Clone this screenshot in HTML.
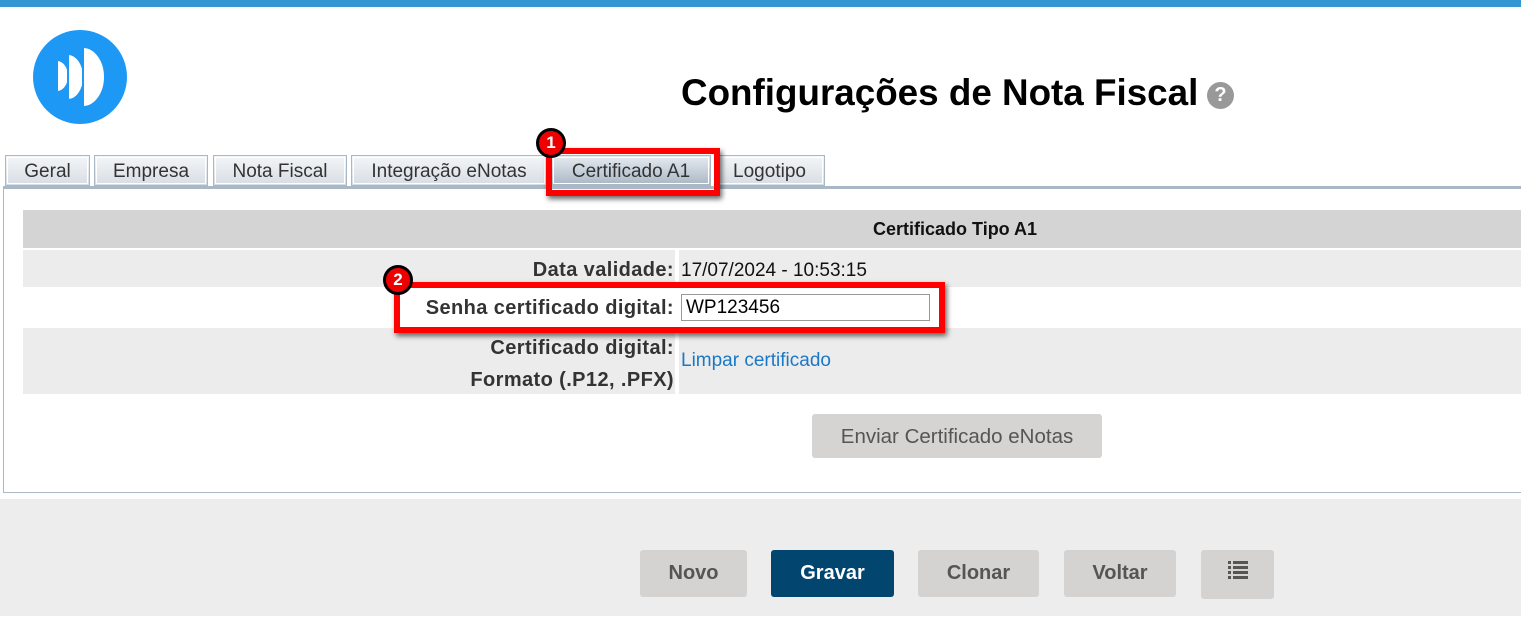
<!DOCTYPE html>
<html><head><meta charset="utf-8"><style>
*{box-sizing:border-box;margin:0;padding:0}
body{width:1521px;height:623px;overflow:hidden;background:#fff;font-family:"Liberation Sans",Arial,sans-serif;position:relative}
.a{position:absolute}
.tab{position:absolute;top:155px;height:31px;border:1px solid #aab8c6;background:linear-gradient(#f4f6f8,#d6dde4);color:#333;font-size:19px;text-align:center;line-height:31px;outline:1px solid #fff;outline-offset:-3px;white-space:nowrap}
.lbl{position:absolute;right:847px;font-size:20px;font-weight:bold;color:#333;text-align:right;letter-spacing:0.4px;white-space:nowrap}
.btn{position:absolute;top:550px;height:47px;background:#d5d3d1;border-radius:3px;color:#555;font-size:20px;font-weight:bold;text-align:center;line-height:47px}
.red{position:absolute;border:6px solid #f00;box-shadow:2px 3px 5px rgba(0,0,0,.6)}
.badge{position:absolute;width:30px;height:30px;border-radius:50%;background:#e00;border:3px solid #000;color:#fff;font-weight:bold;font-size:17px;text-align:center;line-height:24px}
</style></head><body>
<div class="a" style="left:0;top:0;width:1521px;height:7px;background:#3398d2"></div>
<svg class="a" style="left:33px;top:30px" width="94" height="94" viewBox="0 0 94 94">
<circle cx="47" cy="47" r="47" fill="#1e98f5"/>
<path d="M24 30 A12 16 0 0 1 24 62 Z" fill="#fff" stroke="#1e98f5" stroke-width="2"/>
<path d="M35 24 A16 23 0 0 1 35 70 Z" fill="#fff" stroke="#1e98f5" stroke-width="2"/>
<path d="M50 17 A22 30 0 0 1 50 77 Z" fill="#fff" stroke="#1e98f5" stroke-width="2"/>
</svg>
<div class="a" style="left:681px;top:72px;font-size:36.8px;font-weight:bold;color:#000">Configurações de Nota Fiscal</div>
<div class="a" style="left:1207px;top:82px;width:27px;height:27px;border-radius:50%;background:#999;color:#fff;font-weight:bold;font-size:20px;text-align:center;line-height:27px">?</div>

<div class="tab" style="left:5px;width:85px">Geral</div>
<div class="tab" style="left:94px;width:114px">Empresa</div>
<div class="tab" style="left:213px;width:134px">Nota Fiscal</div>
<div class="tab" style="left:351px;width:196px">Integração eNotas</div>
<div class="tab" style="left:551px;width:160px;background:linear-gradient(#e6ebf0,#a9b7c4)">Certificado A1</div>
<div class="tab" style="left:714px;width:111px">Logotipo</div>

<div class="a" style="left:3px;top:186px;width:1530px;height:307px;border:1px solid #aab8c6;border-top:3px solid #aab8c6"></div>
<div class="a" style="left:23px;top:210px;width:1500px;height:38px;background:#d4d4d4;font-size:18px;font-weight:bold;line-height:38px;padding-left:850px;color:#111">Certificado Tipo A1</div>
<div class="a" style="left:23px;top:250px;width:1500px;height:37px;background:#ececec"></div>
<div class="a" style="left:23px;top:328px;width:1500px;height:66px;background:#ececec"></div>
<div class="a" style="left:675px;top:250px;width:4px;height:144px;background:#fff"></div>
<div class="lbl" style="top:259px">Data validade:</div>
<div class="a" style="left:681px;top:260px;font-size:19px;color:#111">17/07/2024 - 10:53:15</div>
<div class="lbl" style="top:297px">Senha certificado digital:</div>
<div class="a" style="left:681px;top:294px;width:249px;height:27px;border:1px solid #999;background:#fff;font-size:19px;line-height:25px;padding-left:4px;color:#000">WP123456</div>
<div class="lbl" style="top:332px;line-height:32px">Certificado digital:<br>Formato (.P12, .PFX)</div>
<div class="a" style="left:681px;top:350px;font-size:19px;color:#1a78c8">Limpar certificado</div>
<div class="a" style="left:812px;top:414px;width:290px;height:44px;background:#d6d4d2;border-radius:3px;color:#555;font-size:20.5px;text-align:center;line-height:46px;white-space:nowrap">Enviar Certificado eNotas</div>

<div class="a" style="left:0;top:499px;width:1521px;height:117px;background:#ededed"></div>
<div class="btn" style="left:640px;width:107px">Novo</div>
<div class="btn" style="left:771px;width:123px;background:#02466f;color:#fff">Gravar</div>
<div class="btn" style="left:918px;width:121px">Clonar</div>
<div class="btn" style="left:1064px;width:112px">Voltar</div>
<div class="btn" style="left:1201px;width:73px;height:49px"><svg width="20" height="18" style="margin-top:11px;vertical-align:top" viewBox="0 0 20 18"><g fill="#555"><rect x="0" y="0" width="3" height="3"/><rect x="5" y="0" width="15" height="3"/><rect x="0" y="5" width="3" height="3"/><rect x="5" y="5" width="15" height="3"/><rect x="0" y="10" width="3" height="3"/><rect x="5" y="10" width="15" height="3"/><rect x="0" y="15" width="3" height="3"/><rect x="5" y="15" width="15" height="3"/></g></svg></div>

<div class="red" style="left:546px;top:148px;width:174px;height:48px"></div>
<div class="badge" style="left:536px;top:128px">1</div>
<div class="red" style="left:394px;top:282px;width:551px;height:51px"></div>
<div class="badge" style="left:383px;top:265px">2</div>
</body></html>
